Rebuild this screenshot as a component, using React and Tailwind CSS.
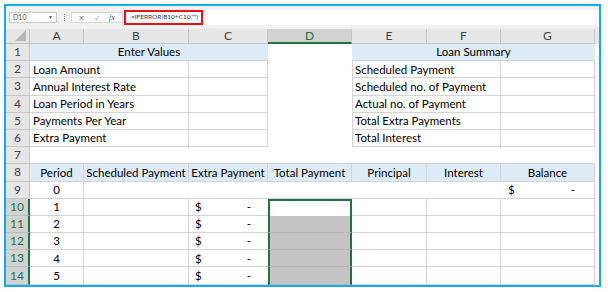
import React from "react";

const COLS = "grid grid-cols-[24px_54px_105px_79px_84px_75px_74px_94px]";
const ROW_H = "h-[17.2px]";
const LINE = "border-[#d4d4d4]";

const RowHead = ({ n, sel }) => (
	<div
		className={
			sel
				? "flex items-center justify-center text-[12px] bg-[#d2d2d2] text-[#217346] border-r-2 border-r-[#217346] border-b border-b-[#bdbdbd]"
				: "flex items-center justify-center text-[12px] bg-[#e6e6e6] text-[#444] border-r border-b border-[#c6c6c6]"
		}
	>
		{n}
	</div>
);

const Row = ({ n, sel, children }) => (
	<div className={`${COLS} ${ROW_H} whitespace-nowrap`}>
		<RowHead n={n} sel={sel} />
		{children}
	</div>
);

const Dollar = ({ pr = "pr-[17px]", pl = "pl-[6px]" }) => (
	<div className={`h-full flex items-center justify-between ${pl} ${pr}`}>
		<span>$</span>
		<span>-</span>
	</div>
);

const FormulaBar = () => (
	<div className="h-[23px] bg-[#f1f1f1] flex items-start">
		<div className="mt-[6px] ml-[3px] w-[48px] h-[11px] bg-white border border-[#c8c8c8] flex items-center justify-between px-[3px] text-[7px] text-[#555]">
			<span>D10</span>
			<span className="text-[5px]">▼</span>
		</div>
		<div className="mt-[8px] ml-[7px] w-[1px] h-[7px] border-l border-dotted border-[#999]" />
		<div className="mt-[6px] ml-[6px] w-[52px] h-[11px] bg-white border border-[#d6d6d6] flex items-center text-[8px] text-[#9a9a9a]">
			<span className="ml-[6px]">✕</span>
			<span className="ml-[9px]">✓</span>
			<span className="ml-[8px] italic text-[#555] font-['Liberation_Serif',serif]">fx</span>
		</div>
		<div className="mt-[4px] ml-[1px] flex-1 h-[15px] bg-white">
			<div className="w-[79px] h-[15px] border-2 border-[#e8101a] flex items-center pl-[5px] text-[6.5px] text-[#333] whitespace-nowrap">
				=IFERROR(B10+C10,"")
			</div>
		</div>
	</div>
);

const ColHeader = () => (
	<div className={`${COLS} h-[15px] bg-[#e6e6e6] text-[12px] text-[#444]`}>
		<div className="border-r border-b border-[#bcbcbc] flex items-end justify-end pr-[3px] pb-[2px]">
			<svg width="11" height="11" viewBox="0 0 11 11">
				<polygon points="11,0 11,11 0,11" fill="#b5b5b5" />
			</svg>
		</div>
		{["A", "B", "C"].map((l) => (
			<div key={l} className="flex items-center justify-center border-r border-b border-[#c6c6c6]">
				{l}
			</div>
		))}
		<div className="flex items-center justify-center bg-[#d2d2d2] text-[#217346] border-r border-r-[#c6c6c6] border-b-2 border-b-[#217346]">
			D
		</div>
		{["E", "F", "G"].map((l) => (
			<div key={l} className="flex items-center justify-center border-r border-b border-[#c6c6c6]">
				{l}
			</div>
		))}
	</div>
);

const labelsLeft = ["Loan Amount", "Annual Interest Rate", "Loan Period in Years", "Payments Per Year", "Extra Payment"];
const labelsRight = ["Scheduled Payment", "Scheduled no. of Payment", "Actual no. of Payment", "Total Extra Payments", "Total Interest"];
const heads = ["Period", "Scheduled Payment", "Extra Payment", "Total Payment", "Principal", "Interest", "Balance"];

export default function App() {
	return (
		<div className="w-[608px] h-[292px] bg-white pt-[4px] pl-[4px] font-['Lato','Liberation_Sans',sans-serif] text-[11.5px] text-[#000] leading-none">
			<div className="w-[597px] h-[283px] border-2 border-[#12aeea] overflow-hidden">
				<FormulaBar />
				<ColHeader />

				<Row n={1}>
					<div className={`col-span-3 bg-[#ddebf7] flex items-center justify-center border-b ${LINE}`}>Enter Values</div>
					<div />
					<div className={`col-span-3 bg-[#ddebf7] flex items-center justify-center border-b ${LINE}`}>Loan Summary</div>
				</Row>

				{labelsLeft.map((label, i) => (
					<Row key={label} n={i + 2}>
						<div className={`col-span-2 flex items-center pl-[3px] border-r border-b ${LINE}`}>{label}</div>
						<div className={`border-r border-b ${LINE}`} />
						<div />
						<div className={`col-span-2 flex items-center pl-[2px] border-l border-r border-b ${LINE}`}>{labelsRight[i]}</div>
						<div className={`border-r border-b ${LINE}`} />
					</Row>
				))}

				<Row n={7}>
					<div className={`col-span-7 border-b ${LINE}`} />
				</Row>

				<Row n={8}>
					{heads.map((h) => (
						<div key={h} className={`bg-[#ddebf7] flex items-center justify-center border-r border-b ${LINE}`}>
							{h}
						</div>
					))}
				</Row>

				<Row n={9}>
					<div className={`flex items-center justify-center border-r border-b ${LINE}`}>0</div>
					<div className={`col-span-5 border-b ${LINE}`} />
					<div className={`border-r border-b ${LINE}`}>
						<Dollar pl="pl-[7px]" pr="pr-[19px]" />
					</div>
				</Row>

				{[1, 2, 3, 4, 5].map((p, i) => (
					<Row key={p} n={p + 9} sel>
						<div className={`flex items-center justify-center border-r border-b ${LINE}`}>{p}</div>
						<div className={`border-r border-b ${LINE}`} />
						<div className={`border-b ${LINE}`}>
							<Dollar />
						</div>
						{i === 0 ? (
							<div className="bg-white border-2 border-b-0 border-[#217346]" />
						) : (
							<div className="bg-[#c4c4c4] border-x-2 border-x-[#217346] border-b border-b-[#b8b8b8]" />
						)}
						<div className={`border-r border-b ${LINE}`} />
						<div className={`border-r border-b ${LINE}`} />
						<div className={`border-r border-b ${LINE}`} />
					</Row>
				))}
			</div>
		</div>
	);
}
